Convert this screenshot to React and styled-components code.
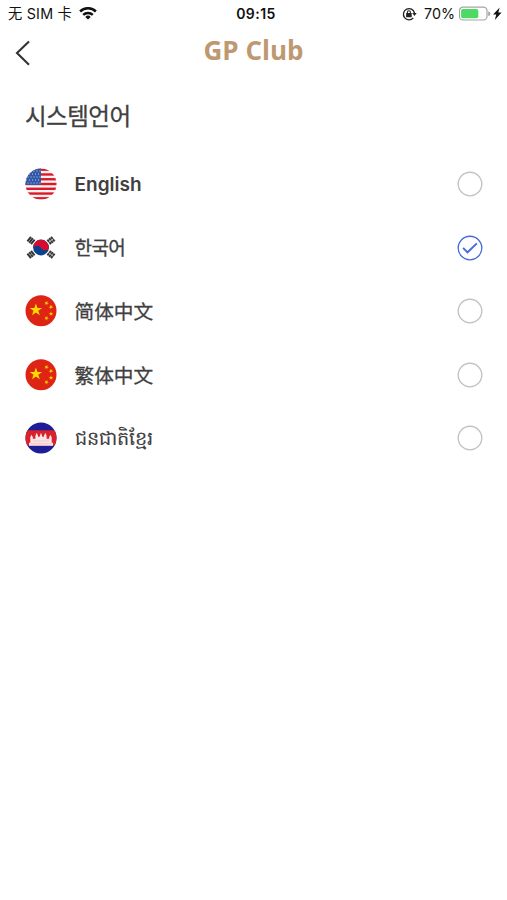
import React, { useState } from 'react';
import styled, { createGlobalStyle } from 'styled-components';

const languages = [
  { id: 'en', label: 'English', size: 19, weight: 600, drop: 2, Flag: FlagUS },
  { id: 'ko', label: '한국어', size: 19, stroke: 0.3, gap: -0.6, drop: 3, Flag: FlagKorea },
  { id: 'zh-CN', label: '简体中文', size: 19.7, stroke: 0.3, drop: 2, Flag: FlagChina },
  { id: 'zh-TW', label: '繁体中文', size: 19.7, stroke: 0.3, drop: 2, Flag: FlagChina },
  { id: 'km', label: 'ជនជាតិខ្មែរ', size: 19.2, stroke: 0.1, gap: 0.2, Flag: FlagCambodia },
];

export default function App() {
  const [selected, setSelected] = useState('ko');

  return (
    <Screen>
      <GlobalStyle />
      <StatusBar>
        <Carrier>
          <span>无 SIM 卡</span>
          <WifiIcon />
        </Carrier>
        <Clock>09:15</Clock>
        <Power>
          <LockIcon />
          <Percent>70%</Percent>
          <BatteryIcon />
        </Power>
      </StatusBar>
      <Header>
        <BackButton aria-label="back">
          <svg width="16" height="28" viewBox="0 0 16 28" fill="none">
            <path d="M14 2.5 2 14l12 11.7" stroke="#333" strokeWidth="2.1" />
          </svg>
        </BackButton>
        <Brand>GP Club</Brand>
      </Header>
      <Title>시스템언어</Title>
      <List>
        {languages.map(({ id, label, size, weight, stroke, gap, drop, Flag }) => (
          <Row key={id} onClick={() => setSelected(id)}>
            <Flag />
            <Label $size={size} $weight={weight} $stroke={stroke} $gap={gap} $drop={drop}>{label}</Label>
            <Radio checked={selected === id} />
          </Row>
        ))}
      </List>
    </Screen>
  );
}

function Radio({ checked }) {
  return (
    <svg width="26" height="26" viewBox="0 0 26 26" fill="none">
      <circle cx="13" cy="13" r="11.8" stroke={checked ? '#4669dc' : '#c2c2c2'} strokeWidth="1.35" />
      {checked && <path d="m6.1 12.9 4.4 4.4 9.4-8.9" stroke="#4669dc" strokeWidth="1.9" />}
    </svg>
  );
}

function WifiIcon() {
  return (
    <svg width="18" height="13" viewBox="0 0 18 13" fill="none" stroke="#111" strokeWidth="2.5">
      <path d="M1.1 4.5a11.2 11.2 0 0 1 15.8 0" />
      <path d="M4.2 7.9a7 7 0 0 1 9.6 0" />
      <path d="M9 12.6 6.3 9.9a3.8 3.8 0 0 1 5.4 0z" fill="#111" stroke="none" />
    </svg>
  );
}

function LockIcon() {
  return (
    <svg width="15" height="14" viewBox="0 0 15 14" fill="none">
      <path d="M11.3 10.8A5.6 5.6 0 1 1 12.5 6" stroke="#222" strokeWidth="1.3" />
      <path d="m10.2 6.1 4.5 0-2.2 2.8z" fill="#222" />
      <rect x="4.1" y="6.1" width="5.6" height="4.1" rx=".5" fill="#222" />
      <path d="M5.4 6.4V5.2a1.5 1.5 0 0 1 3 0v1.2" stroke="#222" strokeWidth="1.1" />
    </svg>
  );
}

function BatteryIcon() {
  return (
    <svg width="44" height="16" viewBox="0 0 44 16">
      <rect x=".4" y="1.2" width="27.6" height="12.8" rx="3.6" fill="#fff" stroke="#a5a5a5" strokeWidth="1.2" />
      <rect x="2.1" y="2.9" width="17.2" height="9.4" rx="1.8" fill="#4cd964" />
      <path d="M29.2 5.5a2.2 2.2 0 0 1 0 4.4z" fill="#a5a5a5" />
      <path d="m40.7 1.4-6.6 7.2h3.2l-1.5 5.4 6.8-7.6h-3.3z" fill="#111" />
    </svg>
  );
}

function FlagUS() {
  return (
    <FlagSvg viewBox="0 0 32 32">
      <clipPath id="us"><circle cx="16" cy="16" r="15.5" /></clipPath>
      <g clipPath="url(#us)">
        <rect width="32" height="32" fill="#f7f4f5" />
        {[0, 1, 2, 3, 4, 5, 6].map((i) => (
          <rect key={i} y={0.5 + i * 4.77} width="32" height="2.4" fill="#df1826" />
        ))}
        <rect width="16" height="17" fill="#3157a8" />
        {[3, 6, 9, 12, 15].map((y, i) => (
          <path
            key={y}
            d={`M${i % 2 ? 1 : 2.5} ${y}H15.5`}
            stroke="#c5d2ed"
            strokeWidth="1"
            strokeDasharray="1 2"
          />
        ))}
      </g>
    </FlagSvg>
  );
}

function FlagKorea() {
  return (
    <FlagSvg viewBox="0 0 32 32">
      <circle cx="16" cy="15.5" r="7.9" fill="#08428e" />
      <path d="M8.5 13A7.9 7.9 0 0 1 23.8 16.5c-1.6 2.4-5.6 2.6-7.8-.6-1.9-2.8-5.5-3-7.4-.1z" fill="#d80a2d" />
      {[[6, 8.5, -52], [26, 8.5, 52], [6, 22.5, 52], [26, 22.5, -52]].map(([x, y, turn], i) => (
        <g key={i} transform={`translate(${x} ${y}) rotate(${turn})`} fill="#333">
          <rect x="-2.9" y="-3.3" width="5.8" height="2" />
          <rect x="-2.9" y="-1" width="5.8" height="2" />
          <rect x="-2.9" y="1.3" width="5.8" height="2" />
          {i > 0 && <rect x="-.2" y={i === 2 ? -1 : -3.3} width=".4" height={i === 2 ? 2 : 6.6} fill="#fff" />}
        </g>
      ))}
    </FlagSvg>
  );
}

const star = 'M0-1 .23-.31.95-.31.36.12.59.81 0 .38-.59.81-.36.12-.95-.31-.23-.31z';

function FlagChina() {
  return (
    <FlagSvg viewBox="0 0 32 32">
      <circle cx="16" cy="15.7" r="15.5" fill="#de2413" />
      <path d={star} transform="translate(10.9 15) scale(6.6)" fill="#ffdc00" />
      <path d={star} transform="translate(21.5 8.2) rotate(20) scale(2.5)" fill="#ffc60a" />
      <path d={star} transform="translate(26 12) rotate(42) scale(2.5)" fill="#ffc60a" />
      <path d={star} transform="translate(26 18.8) scale(2.5)" fill="#ffc60a" />
      <path d={star} transform="translate(21.5 23.2) rotate(22) scale(2.5)" fill="#ffc60a" />
    </FlagSvg>
  );
}

function FlagCambodia() {
  return (
    <FlagSvg viewBox="0 0 32 32">
      <clipPath id="kh"><circle cx="16" cy="16" r="15.5" /></clipPath>
      <g clipPath="url(#kh)">
        <rect width="32" height="32" fill="#1d1d96" />
        <rect y="8.3" width="32" height="15.4" fill="#d9222c" />
        <path
          d="M4 23.7v-3h1.3v-5.5l1.2-2.4 1.4 2.4v1.5h2.5v-3l1.3-3 1.3 3v1h1.6l1.4-4 1.4 4H19v-1l1.3-3 1.3 3v3h2.5v-1.5l1.4-2.4 1.2 2.4v5.5H28v3z"
          fill="#fbe6e7"
        />
        <path d="M5.5 21.8h21M8 19h16" stroke="#efa5aa" strokeWidth=".5" />
      </g>
    </FlagSvg>
  );
}

const GlobalStyle = createGlobalStyle`
  * { box-sizing: border-box; }
  body {
    margin: 0;
    background: #fff;
  }
`;
const Screen = styled.main`
  min-height: 900px;
  background: #fff;
  color: #404040;
  font-family: Inter, 'Noto Sans CJK SC', sans-serif;
`;
const StatusBar = styled.div`
  display: grid;
  grid-template-columns: 1fr auto 1fr;
  align-items: center;
  height: 27px;
  padding: 0 4px 0 8px;
  color: #111;
  font-size: 14.3px;
  line-height: 20px;
`;
const Carrier = styled.div`
  display: flex;
  align-items: center;
  gap: 7px;
  letter-spacing: 0.2px;
  white-space: nowrap;
`;
const Clock = styled.time`
  padding-left: 1px;
  font-size: 14px;
  font-weight: 600;
  letter-spacing: 0.45px;
`;
const Power = styled.div`
  display: flex;
  align-items: center;
  justify-content: flex-end;
`;
const Percent = styled.span`
  margin: 0 4px 0 7px;
`;
const Header = styled.header`
  display: grid;
  grid-template-columns: 60px 1fr 60px;
  align-items: center;
  height: 49px;
`;
const BackButton = styled.button`
  display: flex;
  padding: 2px 0 0 15px;
  border: 0;
  background: none;
`;
const Brand = styled.h1`
  margin: 0;
  padding-bottom: 3px;
  color: #bd9871;
  font: 700 26px/36px 'Open Sans', sans-serif;
  text-align: center;
`;
const Title = styled.h2`
  margin: 0;
  padding: 19px 25px 0;
  height: 76.4px;
  font: 400 23.5px/40px 'Noto Sans CJK KR', sans-serif;
  letter-spacing: -0.5px;
  -webkit-text-stroke: 0.3px #404040;
`;
const List = styled.div`
  display: flex;
  flex-direction: column;
`;
const Row = styled.div`
  display: flex;
  align-items: center;
  height: 63.5px;
  padding: 0 24px 0 24.5px;
  cursor: pointer;
`;
const FlagSvg = styled.svg`
  flex: none;
  width: 32px;
  height: 32px;
`;
const Label = styled.span`
  flex: 1;
  margin-left: 18px;
  padding-top: ${({ $drop }) => $drop || 0}px;
  font-size: ${({ $size }) => $size}px;
  font-weight: ${({ $weight }) => $weight || 400};
  line-height: 30px;
  letter-spacing: ${({ $gap }) => $gap || 0}px;
  -webkit-text-stroke: ${({ $stroke }) => $stroke || 0}px #404040;
`;
